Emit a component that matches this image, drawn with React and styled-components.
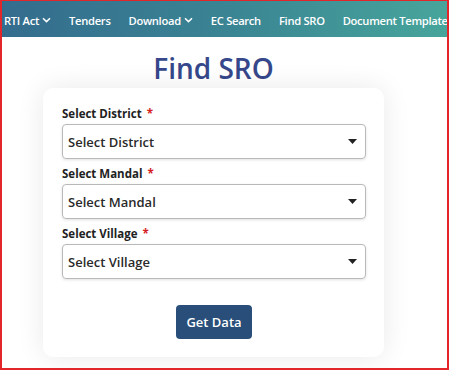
import React from "react";
import styled, { createGlobalStyle } from "styled-components";

const Global = createGlobalStyle`
  html, body { margin: 0; padding: 0; background: #fff; }
  body { font-family: "Open Sans", "Liberation Sans", sans-serif; }
  * { box-sizing: border-box; }
`;

const Frame = styled.div`
  width: 449px;
  height: 370px;
  border-top: 1px solid #e3262a;
  border-left: 2px solid #e3262a;
  border-right: 2px solid #e3262a;
  border-bottom: 2px solid #e3262a;
  overflow: hidden;
  display: flex;
  flex-direction: column;
  background: #fff;
`;

const Nav = styled.nav`
  height: 36px;
  flex: none;
  display: flex;
  align-items: center;
  gap: 18px;
  padding-left: 2px;
  padding-top: 2px;
  white-space: nowrap;
  background: linear-gradient(90deg, #346c8d 0%, #3a8493 50%, #47a59b 100%);
`;

const NavItem = styled.span`
  display: inline-flex;
  align-items: center;
  gap: 3px;
  color: #fff;
  font-size: 11.2px;
  font-weight: 600;
  letter-spacing: -0.3px;
`;

const Chevron = () => (
  <svg width="9" height="6" viewBox="0 0 9 6">
    <path d="M1 1.3 L4.5 4.6 L8 1.3" fill="none" stroke="#fff" strokeWidth="1.5" />
  </svg>
);

const Main = styled.main`
  flex: 1;
  display: flex;
  flex-direction: column;
  align-items: flex-start;
  padding-left: 41px;
`;

const Title = styled.h1`
  margin: 13px 0 0 0;
  width: 341px;
  text-align: center;
  color: #36488b;
  font-size: 28px;
  font-weight: 600;
  line-height: 36px;
`;

const Card = styled.div`
  margin-top: 2px;
  width: 341px;
  height: 269px;
  background: #fff;
  border-radius: 10px;
  box-shadow: 0 0 28px rgba(0, 0, 0, 0.09);
  padding: 18px 18px 0 19px;
  display: flex;
  flex-direction: column;
`;

const Field = styled.div`
  display: flex;
  flex-direction: column;
  gap: 2px;
  margin-bottom: 7px;
`;

const Label = styled.label`
  font-size: 11.5px;
  font-weight: 700;
  color: #222;
  line-height: 16px;
  & > b {
    color: #d42020;
    margin-left: 5px;
    font-weight: 700;
  }
`;

const SelectBox = styled.div`
  height: 35px;
  border: 1px solid #b9b9b9;
  border-radius: 4px;
  box-shadow: 0 1px 3px rgba(0, 0, 0, 0.12);
  display: flex;
  align-items: center;
  justify-content: space-between;
  padding: 0 8px 0 5px;
  font-size: 13px;
  font-weight: 600;
  color: #2a2a2a;
`;

const Caret = () => (
  <svg width="9" height="5" viewBox="0 0 9 5">
    <path d="M0 0 L9 0 L4.5 5 Z" fill="#222" />
  </svg>
);

const ButtonRow = styled.div`
  display: flex;
  justify-content: center;
  margin-top: 19px;
`;

const Button = styled.button`
  height: 34px;
  padding: 0 10px;
  border: none;
  border-radius: 4px;
  background: #284e79;
  color: #fff;
  font-family: inherit;
  font-size: 13px;
  font-weight: 600;
`;

const fields = ["District", "Mandal", "Village"];

export default function App() {
  return (
    <>
      <Global />
      <Frame>
        <Nav>
          <NavItem>RTI Act <Chevron /></NavItem>
          <NavItem>Tenders</NavItem>
          <NavItem>Download <Chevron /></NavItem>
          <NavItem>EC Search</NavItem>
          <NavItem>Find SRO</NavItem>
          <NavItem>Document Template</NavItem>
        </Nav>
        <Main>
          <Title>Find SRO</Title>
          <Card>
            {fields.map((f) => (
              <Field key={f}>
                <Label>Select {f}<b>*</b></Label>
                <SelectBox>
                  <span>Select {f}</span>
                  <Caret />
                </SelectBox>
              </Field>
            ))}
            <ButtonRow>
              <Button>Get Data</Button>
            </ButtonRow>
          </Card>
        </Main>
      </Frame>
    </>
  );
}
